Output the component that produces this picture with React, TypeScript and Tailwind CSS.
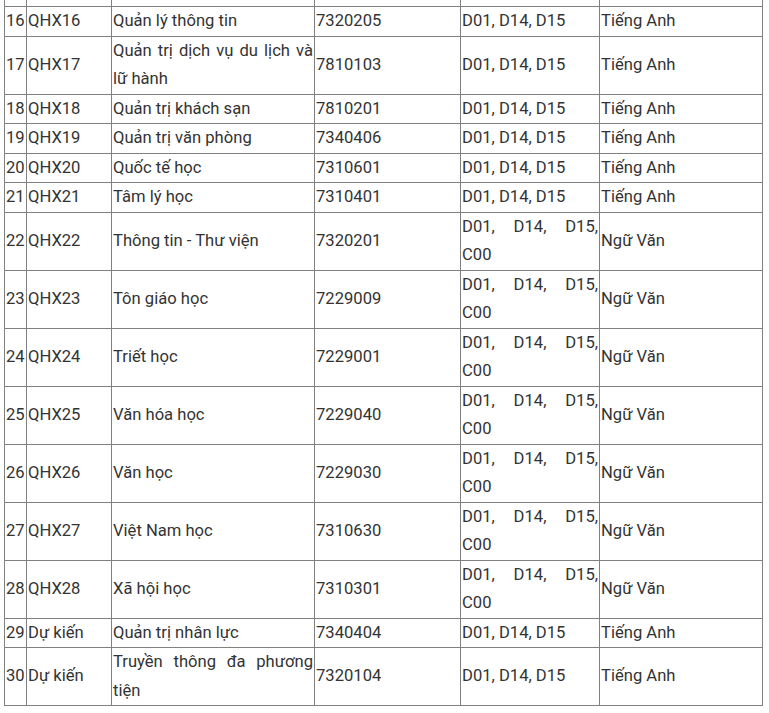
const rows: [string, string, string, string, string, string][] = [
  ['16', 'QHX16', 'Quản lý thông tin', '7320205', 'D01, D14, D15', 'Tiếng Anh'],
  ['17', 'QHX17', 'Quản trị dịch vụ du lịch và lữ hành', '7810103', 'D01, D14, D15', 'Tiếng Anh'],
  ['18', 'QHX18', 'Quản trị khách sạn', '7810201', 'D01, D14, D15', 'Tiếng Anh'],
  ['19', 'QHX19', 'Quản trị văn phòng', '7340406', 'D01, D14, D15', 'Tiếng Anh'],
  ['20', 'QHX20', 'Quốc tế học', '7310601', 'D01, D14, D15', 'Tiếng Anh'],
  ['21', 'QHX21', 'Tâm lý học', '7310401', 'D01, D14, D15', 'Tiếng Anh'],
  ['22', 'QHX22', 'Thông tin - Thư viện', '7320201', 'D01, D14, D15, C00', 'Ngữ Văn'],
  ['23', 'QHX23', 'Tôn giáo học', '7229009', 'D01, D14, D15, C00', 'Ngữ Văn'],
  ['24', 'QHX24', 'Triết học', '7229001', 'D01, D14, D15, C00', 'Ngữ Văn'],
  ['25', 'QHX25', 'Văn hóa học', '7229040', 'D01, D14, D15, C00', 'Ngữ Văn'],
  ['26', 'QHX26', 'Văn học', '7229030', 'D01, D14, D15, C00', 'Ngữ Văn'],
  ['27', 'QHX27', 'Việt Nam học', '7310630', 'D01, D14, D15, C00', 'Ngữ Văn'],
  ['28', 'QHX28', 'Xã hội học', '7310301', 'D01, D14, D15, C00', 'Ngữ Văn'],
  ['29', 'Dự kiến', 'Quản trị nhân lực', '7340404', 'D01, D14, D15', 'Tiếng Anh'],
  ['30', 'Dự kiến', 'Truyền thông đa phương tiện', '7320104', 'D01, D14, D15', 'Tiếng Anh'],
]

const widths = ['w-[22px]', 'w-[85px]', 'w-[203px]', 'w-[146px]', 'w-[139px]', 'w-[163px]']

export default function App() {
  return (
    <div className="bg-white w-[769px] h-[713px] overflow-hidden pl-[4px] font-['Roboto',sans-serif] text-[16.6px] text-[#333]">
      <table className="border-collapse table-fixed w-[759px] mt-[-1px]">
        <colgroup>
          {widths.map((w, i) => (
            <col key={i} className={w} />
          ))}
        </colgroup>
        <tbody>
          <tr className="h-[7px]">
            {widths.map((_, i) => (
              <td key={i} className="border border-[#808080] p-0" />
            ))}
          </tr>
          {rows.map((r) => (
            <tr key={r[0]}>
              {r.map((cell, i) => (
                <td
                  key={i}
                  className="border border-[#808080] px-[1px] py-0 align-middle text-justify leading-[28.5px]"
                >
                  {cell}
                </td>
              ))}
            </tr>
          ))}
        </tbody>
      </table>
    </div>
  )
}
